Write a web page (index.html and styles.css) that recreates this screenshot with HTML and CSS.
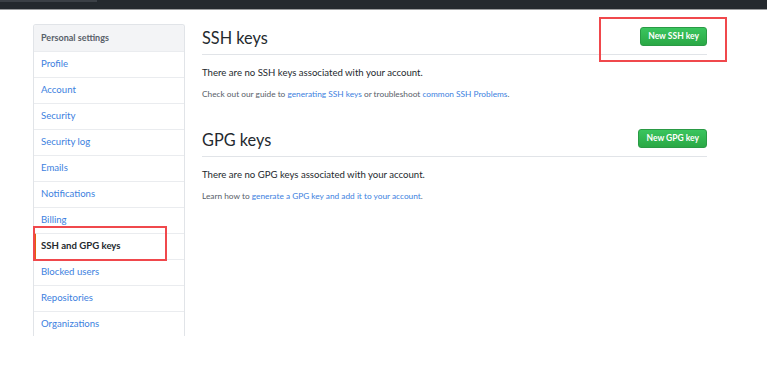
FILE: index.html
```html
<!DOCTYPE html>
<html>
<head>
<meta charset="utf-8">
<link rel="stylesheet" href="styles.css">
</head>
<body>
<div class="topbar"><div class="tab"></div></div>
<div class="page">
  <nav class="sidebar">
    <div class="side-head">Personal settings</div>
    <a class="side-item">Profile</a>
    <a class="side-item">Account</a>
    <a class="side-item">Security</a>
    <a class="side-item">Security log</a>
    <a class="side-item">Emails</a>
    <a class="side-item">Notifications</a>
    <a class="side-item">Billing</a>
    <a class="side-item active">SSH and GPG keys</a>
    <a class="side-item">Blocked users</a>
    <a class="side-item">Repositories</a>
    <a class="side-item">Organizations</a>
  </nav>
  <main class="main">
    <section class="block">
      <div class="subhead">
        <h2 class="title">SSH keys</h2>
        <button class="btn">New SSH key</button>
      </div>
      <p class="lead">There are no SSH keys associated with your account.</p>
      <p class="note">Check out our guide to <a>generating SSH keys</a> or troubleshoot <a>common SSH Problems</a>.</p>
    </section>
    <section class="block gpg">
      <div class="subhead">
        <h2 class="title">GPG keys</h2>
        <button class="btn">New GPG key</button>
      </div>
      <p class="lead">There are no GPG keys associated with your account.</p>
      <p class="note">Learn how to <a>generate a GPG key and add it to your account</a>.</p>
    </section>
  </main>
  <div class="mark mark-btn"></div>
  <div class="mark mark-nav"></div>
</div>
</body>
</html>
```
FILE: styles.css
```css
* { box-sizing: border-box; }
html, body { margin: 0; padding: 0; background: #fff; }
body {
  font-family: "Segoe UI", Lato, "Noto Sans", sans-serif;
  color: #24292e;
  width: 767px;
  height: 379px;
  overflow: hidden;
}
.topbar {
  height: 10px;
  background: #24292e;
  border-bottom: 1px solid #9a9c9e;
}
.tab {
  width: 97px;
  height: 2px;
  background: #3b4046;
}
.page {
  position: relative;
  display: flex;
  align-items: flex-start;
  gap: 17px;
  padding: 14px 0 0 33px;
}
.sidebar {
  width: 152px;
  height: 312px;
  overflow: hidden;
  border: 1px solid #e1e4e8;
  border-bottom: none;
  border-radius: 3px 3px 0 0;
  display: flex;
  flex-direction: column;
}
.side-head {
  height: 26px;
  flex: none;
  background: #f3f4f6;
  color: #586069;
  font-size: 9px;
  font-weight: 700;
  display: flex;
  align-items: center;
  padding: 0 0 2px 7px;
}
.side-item {
  height: 26px;
  flex: none;
  display: flex;
  align-items: center;
  padding: 0 0 3px 7px;
  border-top: 1px solid #eaecef;
  color: #3d7fe0;
  font-size: 9.6px;
}
.side-item.active {
  color: #24292e;
  font-weight: 700;
  border-left: 2px solid #e36209;
  padding-left: 5px;
}
.main {
  width: 505px;
  display: flex;
  flex-direction: column;
}
.subhead {
  height: 31px;
  display: flex;
  justify-content: space-between;
  align-items: flex-start;
  border-bottom: 1px solid #e1e4e8;
  padding-top: 3px;
}
.title {
  margin: 0;
  font-size: 16.3px;
  font-weight: 400;
  line-height: 22px;
  color: #24292e;
}
.btn {
  height: 19px;
  padding: 0 7px;
  border: 1px solid #2a9a45;
  border-radius: 3px;
  background: linear-gradient(#3ac55e, #2aa845);
  color: #fff;
  font-family: inherit;
  font-size: 8.5px;
  font-weight: 700;
  line-height: 17px;
}
.lead {
  margin: 11px 0 0;
  font-size: 9.6px;
  line-height: 14px;
  color: #24292e;
}
.note {
  margin: 8px 0 0;
  font-size: 8.3px;
  line-height: 12px;
  color: #586069;
}
.note a { color: #3d7fe0; }
.gpg { margin-top: 26px; }
.mark {
  position: absolute;
  border: 2px solid #f0484c;
}
.mark-btn { left: 599px; top: 7px; width: 128px; height: 45px; }
.mark-nav { left: 33px; top: 216px; width: 134px; height: 35px; }
```
